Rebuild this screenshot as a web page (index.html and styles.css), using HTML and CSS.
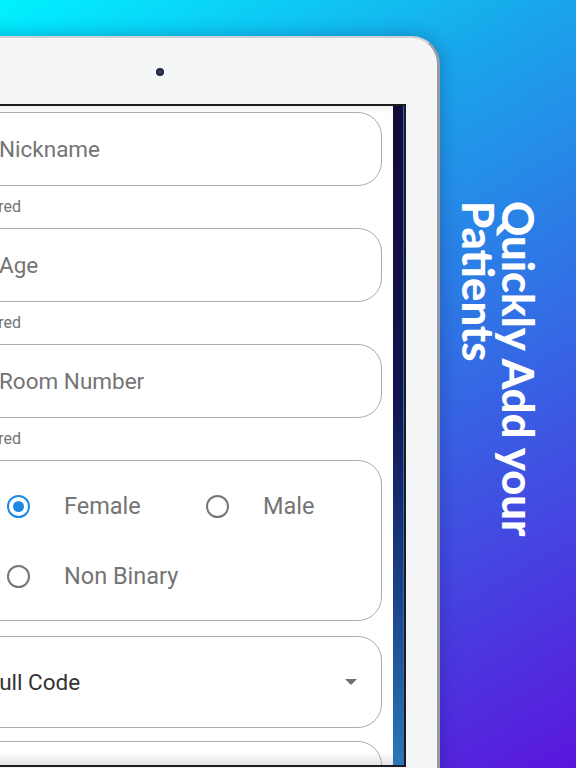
FILE: index.html
```html
<!DOCTYPE html>
<html lang="en">
<head>
  <meta charset="UTF-8">
  <meta name="viewport" content="width=device-width, initial-scale=1.0">
  <title>Quickly Add your Patients</title>
  <link rel="stylesheet" href="styles.css">
</head>
<body>
  <main class="stage">
    <div class="device">
      <div class="bezel-top"><span class="camera"></span></div>
      <div class="screen">
        <div class="form">
          <div class="field"><span class="hint">Nickname</span></div>
          <div class="helper">Required</div>
          <div class="field"><span class="hint">Age</span></div>
          <div class="helper">Required</div>
          <div class="field"><span class="hint">Room Number</span></div>
          <div class="helper">Required</div>

          <div class="field choices">
            <div class="radio-row">
              <label class="radio checked"><span class="ring"></span>Female</label>
              <label class="radio"><span class="ring"></span>Male</label>
            </div>
            <div class="radio-row">
              <label class="radio"><span class="ring"></span>Non Binary</label>
            </div>
          </div>

          <div class="field select">
            <span class="value">Full Code</span>
            <svg class="arrow" width="12" height="6" viewBox="0 0 12 6"><path d="M0 0h12L6 6z" fill="#707070"/></svg>
          </div>
          <div class="field next"></div>
        </div>
        <div class="strip"></div>
      </div>
    </div>

    <div class="caption">
      <h1>Quickly Add your<br>Patients</h1>
    </div>
  </main>
</body>
</html>
```

FILE: styles.css
```css
body {
  margin: 0;
  width: 576px;
  height: 768px;
  overflow: hidden;
  background: linear-gradient(150deg, #00f2ff 0%, #1aa4ea 30%, #5a16dc 100%);
  font-family: Roboto, "Noto Sans", sans-serif;
}
.stage {
  display: flex;
  height: 768px;
}

/* tablet frame */
.device {
  flex: none;
  width: 560px;
  height: 760px;
  margin-left: -120px;
  margin-top: 36px;
  box-sizing: border-box;
  padding: 0 31px 0 32px;
  background-color: #f4f5f7;
  border: 2px solid #cfd0d3;
  border-right: 3px solid #9a9ca1;
  border-radius: 28px;
  box-shadow: 0 0 18px rgba(10, 20, 90, 0.3);
}
.bezel-top {
  height: 66px;
  box-sizing: border-box;
  padding-top: 2px;
  display: flex;
  justify-content: center;
  align-items: center;
}
.camera {
  width: 8px;
  height: 8px;
  border-radius: 50%;
  background: radial-gradient(circle at 50% 50%, #3a4a7a 0%, #1b1f33 60%);
}
.screen {
  display: flex;
  height: 659px;
  border: 2px solid #1c1c1e;
  background-color: #fff;
  overflow: hidden;
}
.form {
  flex: 1;
  min-width: 0;
  display: flex;
  flex-direction: column;
  padding: 6px 11px 0 34px;
  box-shadow: inset 0 6px 6px -3px rgba(0, 0, 0, 0.08), inset 0 -14px 10px -8px rgba(0, 0, 0, 0.12);
}
.strip {
  flex: none;
  width: 10px;
  border-right: 1px solid #2c6cb4;
  background: linear-gradient(to bottom, #140838 0%, #121450 45%, #1b4488 75%, #2a78b8 100%);
}

/* form fields */
.field {
  flex: none;
  height: 74px;
  box-sizing: border-box;
  display: flex;
  align-items: center;
  border: 1.5px solid #ababab;
  border-radius: 24px;
}
.hint {
  padding-left: 48px;
  font-size: 22.5px;
  color: #747474;
}
.helper {
  flex: none;
  height: 42px;
  box-sizing: border-box;
  padding: 11px 0 0 8px;
  font-size: 16px;
  line-height: 19px;
  color: #737373;
}
.choices {
  height: 161px;
  flex-direction: column;
  align-items: stretch;
  padding-top: 10px;
}
.radio-row {
  display: flex;
  align-items: center;
  height: 70px;
  padding-left: 56px;
}
.radio {
  flex: none;
  display: flex;
  align-items: center;
  gap: 34px;
  width: 199px;
  font-size: 23.5px;
  color: #747474;
}
.ring {
  width: 23px;
  height: 23px;
  box-sizing: border-box;
  border: 2.5px solid #757575;
  border-radius: 50%;
  display: flex;
  justify-content: center;
  align-items: center;
}
.radio.checked .ring {
  border-color: #1e88e5;
}
.radio.checked .ring::after {
  content: "";
  width: 11px;
  height: 11px;
  border-radius: 50%;
  background-color: #1e88e5;
}
.select {
  height: 92px;
  margin-top: 15px;
  justify-content: space-between;
  padding: 0 24px 0 36px;
}
.value {
  font-size: 22.5px;
  color: #333;
}
.next {
  margin-top: 13px;
}

/* side caption */
.caption {
  flex: 1;
  display: flex;
  justify-content: center;
  padding: 201px 18px 0 0;
}
.caption h1 {
  writing-mode: vertical-rl;
  margin: 0;
  font-family: Lato, "Open Sans", sans-serif;
  font-weight: 900;
  font-size: 43.5px;
  line-height: 40px;
  color: #fff;
}
```
